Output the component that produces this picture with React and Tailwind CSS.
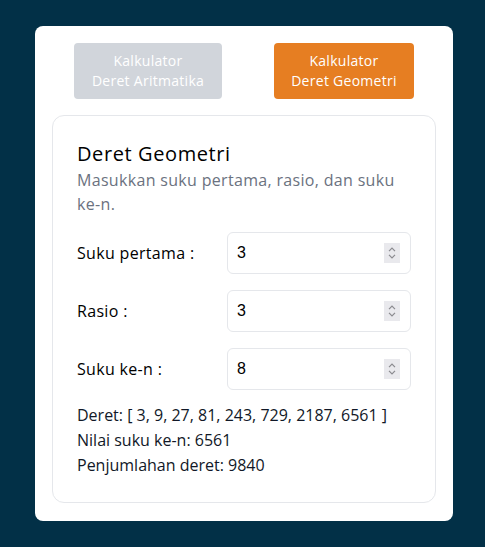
import React, { useState } from 'react';

const Spinner = () => (
  <div className="flex h-5 w-4 flex-col items-center justify-center bg-[#e9e9ed]">
    <svg width="8" height="5" viewBox="0 0 8 5" fill="none" stroke="#8a8a8f" strokeWidth="1.2">
      <path d="M1 4.2 L4 1.2 L7 4.2" />
    </svg>
    <svg width="8" height="5" viewBox="0 0 8 5" fill="none" stroke="#8a8a8f" strokeWidth="1.2" className="mt-[2px]">
      <path d="M1 0.8 L4 3.8 L7 0.8" />
    </svg>
  </div>
);

const NumberField = ({ label, value, onChange }) => (
  <div className="flex items-center">
    <label className="flex-1 text-base tracking-[0.02em] text-black">{label}</label>
    <div className="flex h-[42px] w-[184px] items-center rounded-md border border-[#e5e7eb] bg-white pl-[9px] pr-[10px]">
      <input
        type="text"
        value={value}
        onChange={(e) => onChange(e.target.value)}
        className="min-w-0 flex-1 bg-transparent text-base text-black outline-none"
        style={{ fontFamily: '"Liberation Sans", Arial, sans-serif' }}
      />
      <Spinner />
    </div>
  </div>
);

export default function App() {
  const [a, setA] = useState('3');
  const [r, setR] = useState('3');
  const [n, setN] = useState('8');

  const first = parseFloat(a) || 0;
  const ratio = parseFloat(r) || 0;
  const count = parseInt(n) || 0;
  const deret = [];
  for (let i = 0; i < count; i++) deret.push(first * Math.pow(ratio, i));
  const last = deret.length ? deret[deret.length - 1] : 0;
  const total = deret.reduce((s, x) => s + x, 0);

  return (
    <div
      className="flex min-h-screen bg-[#023047] pt-[26px] pl-[35px]"
      style={{ fontFamily: '"Open Sans", "Noto Sans", sans-serif' }}
    >
      <div className="h-fit w-[418px] rounded-lg bg-white px-[17px] pt-[17px] pb-[18px]">
        <div className="flex justify-between px-[22px]">
          <button className="w-[148px] rounded bg-[#d1d5db] py-2 text-sm leading-5 font-medium tracking-[0.02em] text-white">
            Kalkulator<br />Deret Aritmatika
          </button>
          <button className="w-[140px] rounded bg-[#e67e22] py-2 text-sm leading-5 font-medium tracking-[0.02em] text-white">
            Kalkulator<br />Deret Geometri
          </button>
        </div>

        <div className="mt-4 rounded-xl border border-[#e5e7eb] p-6">
          <h2 className="text-xl leading-7 font-medium tracking-[0.03em] text-black">Deret Geometri</h2>
          <p className="max-w-[325px] text-base leading-6 tracking-[0.02em] text-[#6b7280]">
            Masukkan suku pertama, rasio, dan suku ke-n.
          </p>

          <div className="mt-4 flex flex-col gap-4">
            <NumberField label="Suku pertama :" value={a} onChange={setA} />
            <NumberField label="Rasio :" value={r} onChange={setR} />
            <NumberField label="Suku ke-n :" value={n} onChange={setN} />
          </div>

          <div className="mt-[13px] text-base leading-[25px] text-[#111827]">
            <p>Deret: [ {deret.join(', ')} ]</p>
            <p>Nilai suku ke-n: {last}</p>
            <p>Penjumlahan deret: {total}</p>
          </div>
        </div>
      </div>
    </div>
  );
}
